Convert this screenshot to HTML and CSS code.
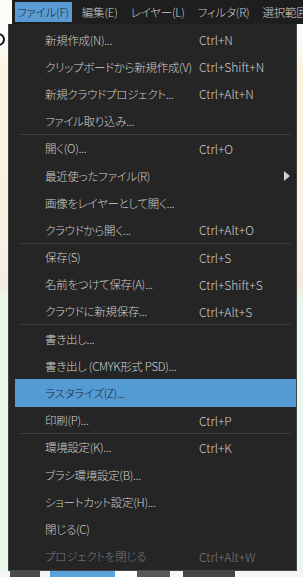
FILE: index.html
```html
<!DOCTYPE html>
<html lang="ja">
<head>
    <meta charset="UTF-8">
    <meta name="viewport" content="width=device-width, initial-scale=1.0">
    <title>ファイルメニュー</title>
    <link rel="stylesheet" href="styles.css">
</head>
<body>
    <div class="menubar">
        <span class="top-item active">ファイル(F)</span>
        <span class="top-item">編集(E)</span>
        <span class="top-item">レイヤー(L)</span>
        <span class="top-item">フィルタ(R)</span>
        <span class="top-item">選択範囲</span>
    </div>
    <div class="middle">
        <div class="edge"><span class="ring"></span></div>
        <div class="dropdown">
            <div class="item"><span>新規作成(N)...</span><span class="key">Ctrl+N</span></div>
            <div class="item"><span>クリップボードから新規作成(V)</span><span class="key">Ctrl+Shift+N</span></div>
            <div class="item"><span>新規クラウドプロジェクト...</span><span class="key">Ctrl+Alt+N</span></div>
            <div class="item"><span>ファイル取り込み...</span><span></span></div>
            <div class="sep"></div>
            <div class="item"><span>開く(O)...</span><span class="key">Ctrl+O</span></div>
            <div class="item"><span>最近使ったファイル(R)</span><span class="arrow"></span></div>
            <div class="item"><span>画像をレイヤーとして開く...</span><span></span></div>
            <div class="item"><span>クラウドから開く...</span><span class="key">Ctrl+Alt+O</span></div>
            <div class="sep"></div>
            <div class="item"><span>保存(S)</span><span class="key">Ctrl+S</span></div>
            <div class="item"><span>名前をつけて保存(A)...</span><span class="key">Ctrl+Shift+S</span></div>
            <div class="item"><span>クラウドに新規保存...</span><span class="key">Ctrl+Alt+S</span></div>
            <div class="sep"></div>
            <div class="item"><span>書き出し...</span><span></span></div>
            <div class="item"><span>書き出し (CMYK形式 PSD)...</span><span></span></div>
            <div class="item hover"><span>ラスタライズ(Z)...</span><span></span></div>
            <div class="item"><span>印刷(P)...</span><span class="key">Ctrl+P</span></div>
            <div class="sep"></div>
            <div class="item"><span>環境設定(K)...</span><span class="key">Ctrl+K</span></div>
            <div class="item"><span>ブラシ環境設定(B)...</span><span></span></div>
            <div class="item"><span>ショートカット設定(H)...</span><span></span></div>
            <div class="item"><span>閉じる(C)</span><span></span></div>
            <div class="item disabled"><span>プロジェクトを閉じる</span><span class="key">Ctrl+Alt+W</span></div>
        </div>
    </div>
    <div class="toolbar">
        <span class="tb tb-dark"></span>
        <span class="tb tb-blue"></span>
        <span class="tb tb-white"></span>
        <span class="tb tb-gray"></span>
        <span class="tb tb-gray2"></span>
    </div>
</body>
</html>
```

FILE: styles.css
```css
body {
    margin: 0;
    width: 303px;
    height: 577px;
    overflow: hidden;
    font-family: "Noto Sans CJK JP", "Noto Sans", sans-serif;
    font-size: 11.5px;
    font-weight: 300;
    font-feature-settings: "palt";
    background: linear-gradient(#fbfbf8 0, #fbfbf8 45px, #fbf4df 70px, #fbf1e4 230px, #f6e9e4 285px, #e9f8ec 300px, #e9f8ec 100%);
}
.menubar {
    margin-left: 12px;
    height: 24px;
    background-color: #1e1e1e;
    display: flex;
    align-items: center;
    gap: 8px;
    padding-left: 3px;
    white-space: nowrap;
    overflow: hidden;
}
.top-item {
    color: #cbcbcb;
    padding: 0 3px 0 2px;
    line-height: 20px;
    letter-spacing: -0.2px;
}
.top-item.active {
    background-color: #5b9bd3;
    color: #14263a;
}
.middle {
    display: flex;
}
.edge {
    width: 8px;
}
.ring {
    display: block;
    width: 9px;
    height: 9px;
    border: 2px solid #111;
    border-radius: 50%;
    margin: 9px 0 0 -8px;
}
.dropdown {
    width: 287px;
    height: 544px;
    padding-top: 2px;
    background-color: #252525;
    border: 1px solid #454545;
    border-top: none;
}
.item {
    display: grid;
    grid-template-columns: 154px 1fr;
    align-items: center;
    height: 27.2px;
    margin-left: 6px;
    padding-left: 30px;
    color: #cdcdcd;
    white-space: nowrap;
    letter-spacing: -0.3px;
}
.key {
    font-size: 12px;
    letter-spacing: 0;
}
.item.hover {
    background-color: #549bd3;
    color: #172a3e;
}
.item.disabled {
    color: #7b7b7b;
}
.sep {
    height: 1px;
    margin: -1px 5px 0 11px;
    background-color: #3d3d3d;
}
.arrow {
    justify-self: end;
    margin-right: 6px;
    width: 0;
    height: 0;
    border-top: 5px solid transparent;
    border-bottom: 5px solid transparent;
    border-left: 6px solid #cfcfcf;
}
.toolbar {
    display: flex;
    height: 6px;
    background-color: #f6f6f6;
}
.tb {
    height: 6px;
}
.tb-dark {
    width: 30px;
    margin-left: 10px;
    background-color: #4a4a4a;
}
.tb-blue {
    width: 65px;
    margin-left: 10px;
    background-color: #5aa2da;
}
.tb-white {
    width: 22px;
    background-color: #ffffff;
}
.tb-gray {
    width: 33px;
    background-color: #585858;
}
.tb-gray2 {
    width: 52px;
    margin-left: 13px;
    background-color: #454545;
}
```
